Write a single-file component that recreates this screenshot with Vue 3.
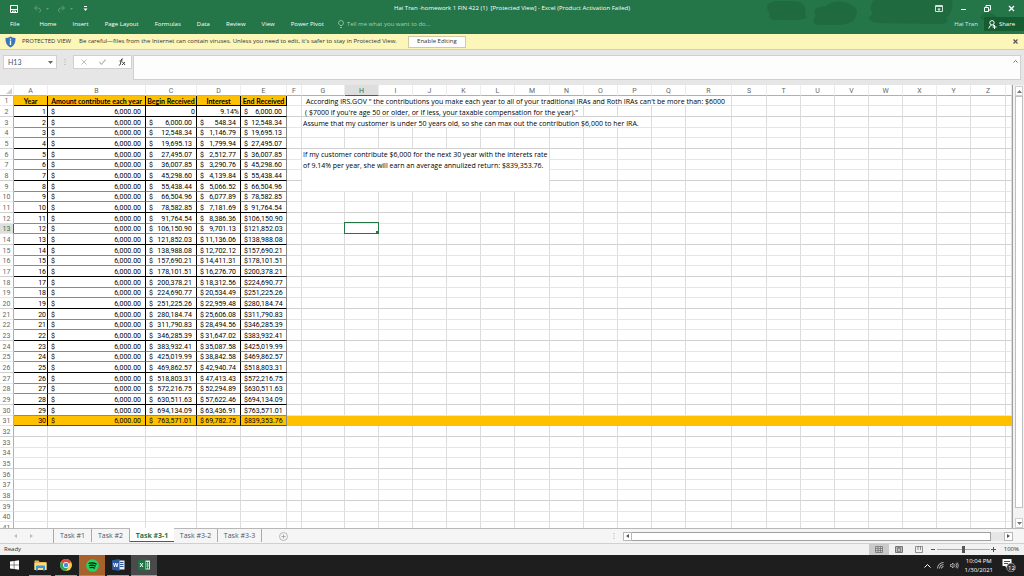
<script setup>
import { ref } from 'vue'

const menus = ['File', 'Home', 'Insert', 'Page Layout', 'Formulas', 'Data', 'Review', 'View', 'Power Pivot']
const letters = 'ABCDEFGHIJKLMNOPQRSTUVWXYZ'.split('')
const sheets = ['Task #1', 'Task #2', 'Task #3-1', 'Task #3-2', 'Task #3-3']
const active = 'Task #3-1'
const zoomLevel = ref(50)

const interest = [
  '9.14%', '548.34', '1,146.79', '1,799.94', '2,512.77', '3,290.76', '4,139.84', '5,066.52', '6,077.89', '7,181.69',
  '8,386.36', '9,701.13', '11,136.06', '12,702.12', '14,411.31', '16,276.70', '18,312.56', '20,534.49', '22,959.48', '25,606.08',
  '28,494.56', '31,647.02', '35,087.58', '38,842.58', '42,940.74', '47,413.43', '52,294.89', '57,622.46', '63,436.91', '69,782.75',
]
const ending = [
  '6,000.00', '12,548.34', '19,695.13', '27,495.07', '36,007.85', '45,298.60', '55,438.44', '66,504.96', '78,582.85', '91,764.54',
  '106,150.90', '121,852.03', '138,988.08', '157,690.21', '178,101.51', '200,378.21', '224,690.77', '251,225.26', '280,184.74', '311,790.83',
  '346,285.39', '383,932.41', '425,019.99', '469,862.57', '518,803.31', '572,216.75', '630,511.63', '694,134.09', '763,571.01', '839,353.76',
]

const notes = {
  1: { span: 12, rows: 1, cls: 'in2', text: 'According IRS.GOV " the contributions you make each year to all of your traditional IRAs and Roth IRAs can\'t be more than: $6000' },
  2: { span: 8, rows: 1, cls: 'in1', text: '( $7000 if you\'re age 50 or older, or If less, your taxable compensation for the year)."' },
  3: { span: 10, rows: 1, cls: '', text: 'Assume that my customer is under 50 years old, so she can max out the contribution $6,000 to her IRA.' },
  6: { span: 7, rows: 4, cls: 'wrap', text: 'If my customer contribute $6,000 for the next 30 year with the interets rate\nof 9.14% per year, she will earn an average annulized return: $839,353.76.' },
}

// Columns F through AA, minus those covered by merged cells
function tailCells(row) {
  const cells = [{ key: 'F' }]
  let skip = 0
  if (notes[row]) {
    cells.push({ key: 'note', note: notes[row] })
    skip = notes[row].span
  } else if (row > 6 && row < 10) {
    skip = 7
  }
  for (const key of [...letters.slice(6 + skip), 'AA']) cells.push({ key, selected: key === 'H' && row === 13 })
  return cells
}

const rows = Array.from({ length: 41 }, (_, i) => {
  const n = i + 1
  const year = n - 1
  const row = { n, tail: tailCells(n), year: null }
  if (n > 1 && n < 32) {
    row.year = year
    row.begin = year === 1 ? null : ending[year - 2]
    row.interest = interest[year - 1]
    row.end = ending[year - 1]
  }
  return row
})
</script>

<template>
  <div class="window">
    <header class="ribbon">
      <svg class="clouds" viewBox="0 0 270 30" aria-hidden="true">
        <path d="M16 14q-8-11 6-13h20q12 3 9 14q6 4-8 5h-22q-8-1-5-6z" />
        <path d="M62 15q-6-8 10-9q6-6 18-4q16 4 12 14q-2 8-16 9h-22q-8-1-2-10z" />
        <path d="M120 0h78q2 12-6 18q6 7-12 6q-40-1-58-1q-12-4-3-9q-5-6 1-14z" />
        <path d="M226 18q2-6 10-5q8 2 6 7q-8 5-16-2z" />
      </svg>
      <div class="titlebar">
        <div class="quick">
          <button aria-label="Save"><svg width="8" height="8" viewBox="0 0 8 8"><path d="M.5.5h7v7h-7zM1 4.500h6M2.500 7.500V6h3v1.500" fill="none" stroke="#fff" /></svg></button>
          <button aria-label="Undo" class="dim"><svg width="17" height="8" viewBox="0 0 17 8"><path d="M4 .5L1.500 3L4 5.500M2 3h3.500q2.500.5 2 3l-1.500 1.500" fill="none" stroke="#5f9d78" /><path d="M13 3h3l-1.500 2z" fill="#5f9d78" /></svg></button>
          <button aria-label="Redo" class="dim"><svg width="17" height="8" viewBox="0 0 17 8"><path d="M5 .5L7.500 3L5 5.500M7 3H3.500Q1 3.500 1.500 6L3 7.500" fill="none" stroke="#5f9d78" /><path d="M13 3h3l-1.500 2z" fill="#5f9d78" /></svg></button>
          <button aria-label="Customize"><svg width="5" height="6" viewBox="0 0 5 6"><path d="M1 .5h3" stroke="#fff" /><path d="M.5 2.500h4L2.500 5z" fill="#fff" /></svg></button>
        </div>
        <h1>Hai Tran -homework 1 FIN 422 (1)&nbsp; [Protected View] - Excel (Product Activation Failed)</h1>
        <div class="winbtns">
          <button aria-label="Ribbon display options"><svg width="8" height="7" viewBox="0 0 8 7"><path d="M.5 .5h7v6h-7zM1 1.500h6M2.500 4.200h3M4 3v3" fill="none" stroke="#e6f0ea" stroke-width=".9" /></svg></button>
          <button aria-label="Minimize"><svg width="7" height="7" viewBox="0 0 7 7"><path d="M1 4.500h5" stroke="#fff" /></svg></button>
          <button aria-label="Restore"><svg width="7" height="7" viewBox="0 0 7 7"><path d="M.5 2.500h4v4h-4zM2 2V.5h4.500V5H5" fill="none" stroke="#fff" /></svg></button>
          <button aria-label="Close"><svg width="7" height="7" viewBox="0 0 7 7"><path d="M1 1l5 5M6 1L1 6" stroke="#fff" stroke-width="1.300" /></svg></button>
        </div>
      </div>
      <nav class="menubar">
        <button v-for="m in menus" :key="m">{{ m }}</button>
        <label class="tell">
          <svg width="6" height="8" viewBox="0 0 6 8"><path d="M2 5.500Q.5 4 .5 2.800Q.8.500 3 .5T5.500 2.800Q5.500 4 4 5.500zM2 7.500h2" fill="none" stroke="#a9cdb8" stroke-width=".8" /></svg>
          <input type="text" placeholder="Tell me what you want to do..." aria-label="Tell me what you want to do" />
        </label>
        <span class="user">Hai Tran</span>
        <button class="share"><svg width="9" height="9" viewBox="0 0 9 9"><circle cx="4" cy="2.800" r="2.200" fill="none" stroke="#fff" /><path d="M.8 8.500Q1 5.500 3.500 5.500M5 5.200L6 6M4.500 7h4M6.500 5v4" fill="none" stroke="#fff" /></svg>Share</button>
      </nav>
    </header>

    <section class="notice">
      <svg width="11" height="12" viewBox="0 0 11 12"><path d="M5.500.5Q8 2 10.500 2Q11 9 5.500 11.500Q0 9 .5 2Q3 2 5.500.5z" fill="#3d76b8" /><path d="M5.500 2.500v1.200M5.500 4.500v4.500" stroke="#fff" stroke-width="1.300" /></svg>
      <strong>PROTECTED VIEW</strong>
      <span class="msg">Be careful—files from the Internet can contain viruses. Unless you need to edit, it's safer to stay in Protected View.</span>
      <button class="enable">Enable Editing</button>
      <button class="dismiss" aria-label="Close message"><svg width="5" height="5" viewBox="0 0 5 5"><path d="M.5.5l4 4M4.500.5l-4 4" stroke="#555" stroke-width="1.200" /></svg></button>
    </section>

    <section class="formula">
      <div class="namebox">
        <input type="text" value="H13" aria-label="Name box" />
        <svg width="5" height="3" viewBox="0 0 5 3"><path d="M0 0h5L2.500 3z" fill="#666" /></svg>
      </div>
      <svg class="dots" width="2" height="7" viewBox="0 0 2 7"><path d="M1 0v7" stroke="#aaa" stroke-dasharray="1 1.500" /></svg>
      <div class="fx">
        <button aria-label="Cancel"><svg width="6" height="6" viewBox="0 0 6 6"><path d="M.5.5l5 5M5.500.5l-5 5" stroke="#bbb" /></svg></button>
        <button aria-label="Enter"><svg width="7" height="6" viewBox="0 0 7 6"><path d="M.5 3l2 2.300L6.500.5" fill="none" stroke="#bbb" stroke-width="1.200" /></svg></button>
        <button aria-label="Insert function"><svg width="8" height="8" viewBox="0 0 8 8"><path d="M5 1Q3.500.5 3.200 2L2.300 6.500Q2 7.500.8 7M1.500 3h3M4.500 4l2.500 3M7 4L4 7" fill="none" stroke="#444" /></svg></button>
      </div>
      <div class="entry">
        <textarea aria-label="Formula bar"></textarea>
        <svg width="5" height="3" viewBox="0 0 5 3"><path d="M.5 2.500l2-2l2 2" fill="none" stroke="#777" /></svg>
      </div>
    </section>

    <main class="sheet">
      <div class="viewport">
        <table>
          <colgroup>
            <col class="w-head" /><col class="w-a" /><col class="w-b" /><col class="w-c" /><col class="w-d" /><col class="w-e" /><col class="w-f" /><col class="w-g" />
            <col v-for="n in 5" :key="n" class="w-n" />
            <col class="w-m" />
            <col v-for="n in 4" :key="'n' + n" class="w-n" />
            <col class="w-e" />
            <col class="w-m" />
            <col v-for="n in 6" :key="'t' + n" class="w-n" />
            <col class="w-m" />
            <col />
          </colgroup>
          <thead>
            <tr>
              <th class="corner"><svg width="6" height="6" viewBox="0 0 6 6"><path d="M6 0v6H0z" fill="#cfcfcf" /></svg></th>
              <th v-for="l in letters" :key="l" scope="col" :class="{ cur: l === 'H' }">{{ l }}</th>
              <th></th>
            </tr>
          </thead>
          <tbody>
            <tr v-for="r in rows" :key="r.n" :class="{ titles: r.n === 1, data: r.year, total: r.n === 31 }">
              <th scope="row" :class="{ cur: r.n === 13 }">{{ r.n }}</th>
              <template v-if="r.n === 1">
                <td>Year</td>
                <td>Amount contribute each year</td>
                <td>Begin Received</td>
                <td>Interest</td>
                <td>End Received</td>
              </template>
              <template v-else-if="r.year">
                <td class="num">{{ r.year }}</td>
                <td><div class="money"><span>$</span><span>6,000.00</span></div></td>
                <td v-if="r.begin"><div class="money"><span>$</span><span>{{ r.begin }}</span></div></td>
                <td v-else class="num">0</td>
                <td v-if="r.year > 1"><div class="money"><span>$</span><span>{{ r.interest }}</span></div></td>
                <td v-else class="num">{{ r.interest }}</td>
                <td><div class="money"><span>$</span><span>{{ r.end }}</span></div></td>
              </template>
              <template v-else>
                <td v-for="c in 5" :key="c"></td>
              </template>
              <template v-for="c in r.tail" :key="c.key">
                <td v-if="c.note" class="note" :class="c.note.cls" :colspan="c.note.span" :rowspan="c.note.rows">{{ c.note.text }}</td>
                <td v-else :class="{ picked: c.selected }"></td>
              </template>
            </tr>
          </tbody>
        </table>
      </div>
      <div class="vscroll">
        <button aria-label="Scroll up"><svg width="5" height="3" viewBox="0 0 5 3"><path d="M0 3h5L2.500 0z" fill="#777" /></svg></button>
        <div class="vthumb"></div>
        <div class="vtrack"></div>
        <button aria-label="Scroll down"><svg width="5" height="3" viewBox="0 0 5 3"><path d="M0 0h5L2.500 3z" fill="#777" /></svg></button>
      </div>
    </main>

    <nav class="tabs">
      <div class="arrows">
        <button aria-label="Previous sheet"><svg width="3" height="4" viewBox="0 0 3 4"><path d="M3 0v4L0 2z" fill="#bbb" /></svg></button>
        <button aria-label="Next sheet"><svg width="3" height="4" viewBox="0 0 3 4"><path d="M0 0v4l3-2z" fill="#bbb" /></svg></button>
      </div>
      <button v-for="s in sheets" :key="s" class="tab" :class="{ on: s === active, long: s.length > 7 }">{{ s }}</button>
      <button class="add" aria-label="New sheet"><svg width="9" height="9" viewBox="0 0 9 9"><circle cx="4.500" cy="4.500" r="4" fill="none" stroke="#aaa" stroke-width=".8" /><path d="M4.500 2.500v4M2.500 4.500h4" stroke="#999" stroke-width=".8" /></svg></button>
      <svg class="grip" width="2" height="6" viewBox="0 0 2 6"><path d="M1 0v6" stroke="#aaa" stroke-dasharray="1 1.500" /></svg>
      <div class="hscroll">
        <button aria-label="Scroll left"><svg width="3" height="4" viewBox="0 0 3 4"><path d="M3 0v4L0 2z" fill="#555" /></svg></button>
        <div class="hthumb"></div>
        <div class="htrack"></div>
        <button aria-label="Scroll right"><svg width="3" height="4" viewBox="0 0 3 4"><path d="M0 0v4l3-2z" fill="#555" /></svg></button>
      </div>
    </nav>

    <footer class="status">
      <span class="ready">Ready</span>
      <button class="view on" aria-label="Normal view"><svg width="8" height="7" viewBox="0 0 8 7"><path d="M.5 .5h7v6h-7zM0 2.500h8M0 4.500h8M3 0v7M5.500 0v7" fill="none" stroke="#777" stroke-width=".8" /></svg></button>
      <button class="view" aria-label="Page layout view"><svg width="8" height="7" viewBox="0 0 8 7"><path d="M.5 .5h7v6h-7z" fill="#bbb" stroke="#777" /><path d="M2.500 1.500h3v4h-3zM3 2.500h2M3 4h2" fill="#eee" stroke="#666" stroke-width=".7" /></svg></button>
      <button class="view" aria-label="Page break view"><svg width="8" height="7" viewBox="0 0 8 7"><path d="M.5 .5h7v6h-7zM3 0v4M5.500 0v4" fill="none" stroke="#777" stroke-width=".8" /></svg></button>
      <button class="step" aria-label="Zoom out"><svg width="4" height="5" viewBox="0 0 4 5"><path d="M0 2.500h4" stroke="#555" /></svg></button>
      <input v-model="zoomLevel" type="range" min="0" max="100" aria-label="Zoom" />
      <button class="step" aria-label="Zoom in"><svg width="5" height="5" viewBox="0 0 5 5"><path d="M0 2.500h5M2.500 0v5" stroke="#555" /></svg></button>
      <span class="pct">100%</span>
    </footer>

    <div class="taskbar">
      <button class="app" aria-label="Start"><svg width="9" height="10" viewBox="0 0 9 10"><path d="M0 1.500L3.800 1v3.700H0zM4.300.9L9 .2v4.500H4.300zM0 5.300h3.800V9L0 8.500zM4.300 5.300H9v4.500l-4.700-.7z" fill="#fff" /></svg></button>
      <button class="app run" aria-label="File Explorer"><svg width="13" height="11" viewBox="0 0 13 11"><path d="M.5.5h4l1 1.500h7v8H.5z" fill="#e9ba4b" /><path d="M.5 3h12v7H.5z" fill="#fbdc83" /><path d="M2 10.500V6.500q0-1 1-1h7q1 0 1 1v4H9V8H4v2.500z" fill="#3f96dc" /></svg></button>
      <button class="app run" aria-label="Chrome"><svg width="12" height="12" viewBox="0 0 12 12"><circle cx="6" cy="6" r="6" fill="#f8cf3c" /><path d="M6 6L.8 3A6 6 0 0 1 11.200 3z" fill="#e0473a" /><path d="M6 6L.8 3A6 6 0 0 0 6 12l2.600-4.500z" fill="#35a455" /><circle cx="6" cy="6" r="2.900" fill="#fff" /><circle cx="6" cy="6" r="2.200" fill="#4a86e8" /></svg></button>
      <button class="app run spotify" aria-label="Spotify"><svg width="13" height="13" viewBox="0 0 13 13"><circle cx="6.500" cy="6.500" r="6.300" fill="#1fd662" /><path d="M2.500 4.500q4-1.500 8 .6M3 6.700q3.500-1.200 6.800.5M3.500 8.700q3-.9 5.500.5" fill="none" stroke="#111" stroke-width="1.200" /></svg></button>
      <button class="app run" aria-label="Word"><svg width="13" height="12" viewBox="0 0 13 12"><path d="M6 1.500h6.500v9H6z" fill="#e8eef8" /><path d="M8 3.500h3.500M8 5.500h3.500M8 7.500h3.500" stroke="#2b579a" /><path d="M0 1.200L7.500 0v12L0 10.800z" fill="#2b579a" /><path d="M1.500 4l1 4l1.200-4l1.200 4l1-4" fill="none" stroke="#fff" stroke-width=".9" /></svg></button>
      <button class="app run excel" aria-label="Excel"><svg width="13" height="12" viewBox="0 0 13 12"><path d="M6 1.500h6v9H6z" fill="#dcebe2" /><path d="M8 3h3v6.500H8z" fill="#1f7244" /><path d="M9.500 3v7M8 5h3M8 7h3" stroke="#dcebe2" stroke-width=".6" /><path d="M0 1.200L7.500 0v12L0 10.800z" fill="#1f7244" /><path d="M2 4l3 4M5 4L2 8" stroke="#fff" /></svg></button>
      <div class="tray">
        <svg width="7" height="4" viewBox="0 0 7 4"><path d="M.5 3.500l3-3l3 3" fill="none" stroke="#fff" /></svg>
        <svg width="7" height="7" viewBox="0 0 7 7"><path d="M.5 6.500A6 6 0 0 1 6.500.5M2.500 6.500A4 4 0 0 1 6.500 2.500M4.500 6.500A2 2 0 0 1 6.500 4.500" fill="none" stroke="#ddd" stroke-width=".8" /></svg>
        <svg width="9" height="7" viewBox="0 0 9 7"><path d="M.5 2.500h1L3 1v5L1.500 4.500h-1zM4.500 2.200q1 1.300 0 2.600M6 1.200q1.800 2.300 0 4.600M7.300.5q2.200 3 0 6" fill="none" stroke="#ddd" stroke-width=".7" /></svg>
        <div class="clock"><time>10:04 PM</time><time>1/30/2021</time></div>
        <svg class="bell" width="14" height="13" viewBox="0 0 14 13"><path d="M.5 0h9v7H5v2L3 7H.5z" fill="#fff" /><path d="M2 2.500h6M2 4.500h4" stroke="#1e1e1e" stroke-width=".8" /><circle cx="9" cy="8.500" r="4.300" fill="#333" stroke="#aaa" stroke-width=".7" /><text x="6" y="11" font-size="6" fill="#fff">12</text></svg>
      </div>
    </div>
  </div>
</template>

<style>
body {
  background: #e6e6e6;
}
</style>

<style scoped>
.window {
  height: 100vh;
  display: flex;
  flex-direction: column;
  overflow: hidden;
  font-family: "Open Sans", "Noto Sans", sans-serif;
  font-size: 6px;
  line-height: 9px;
  color: #333;
  background: #e6e6e6;
}
.window * {
  box-sizing: border-box;
}
button,
input,
textarea {
  font: inherit;
  color: inherit;
  margin: 0;
  padding: 0;
  border: 0;
  background: none;
  outline: 0;
}
button {
  display: flex;
  align-items: center;
  justify-content: center;
  white-space: nowrap;
}
svg {
  display: block;
  flex: none;
}

.ribbon {
  position: relative;
  background: #247548;
  color: #fff;
  height: 34px;
  flex: none;
}
.clouds {
  position: absolute;
  top: 0;
  right: 0;
  width: 270px;
  height: 30px;
  fill: #206a40;
}
.titlebar,
.menubar {
  position: relative;
  display: flex;
  align-items: center;
  height: 17px;
}
.titlebar {
  display: grid;
  grid-template-columns: 1fr auto 1fr;
}
.quick {
  display: flex;
  align-items: center;
  gap: 7px;
  padding-left: 10px;
}
.quick button:first-child {
  margin-right: 8px;
}
.quick button:last-child {
  margin-left: 2px;
}
h1 {
  margin: 0;
  font-size: 6px;
  font-weight: 400;
}
.winbtns {
  display: flex;
  justify-content: flex-end;
  gap: 17px;
  padding-right: 9px;
}
.menubar {
  padding-left: 10px;
  gap: 16px;
  height: 14px;
}
.menubar > button:first-child {
  margin-right: 4px;
}
.tell {
  display: flex;
  align-items: center;
  gap: 3px;
  flex: 1;
  margin-left: -2px;
}
.tell input {
  width: 120px;
}
.tell input::placeholder {
  color: #a9cdb8;
  opacity: 1;
}
.user {
  color: #dcebe2;
}
.menubar .share {
  align-self: stretch;
  gap: 2px;
  padding: 0 9px 0 4px;
  margin-left: -10px;
  background: #155c31;
}

.notice {
  display: flex;
  align-items: center;
  height: 16px;
  flex: none;
  padding: 0 6px 0 5px;
  background: #fcf6b8;
  border-bottom: 1px solid #d8d29a;
}
.notice strong {
  font-weight: 400;
  margin-left: 6px;
}
.msg {
  margin-left: 8px;
}
.enable {
  width: 58px;
  height: 12px;
  margin-left: 11px;
  background: #fff;
  border: 1px solid #cfcba8;
}
.dismiss {
  margin-left: auto;
}

.formula {
  display: flex;
  align-items: flex-start;
  height: 35px;
  flex: none;
  padding: 5px 3px 5px 3px;
}
.namebox {
  display: flex;
  align-items: center;
  width: 54px;
  height: 14px;
  padding: 0 3px 0 4px;
  background: #fff;
  border: 1px solid #d0d0d0;
}
.namebox input {
  flex: 1;
  min-width: 0;
  font-family: Lato, "Open Sans", sans-serif;
  font-size: 7px;
  color: #456;
}
.dots {
  margin: 4px 7px 0 7px;
}
.fx {
  display: flex;
  width: 59px;
  height: 14px;
  background: #fff;
  border: 1px solid #d0d0d0;
}
.fx button {
  flex: 1;
}
.entry {
  display: flex;
  flex: 1;
  height: 25px;
  margin-left: 1px;
  padding: 4px 2px 0 0;
  background: #fdfdfd;
  border: 1px solid #d0d0d0;
}
.entry textarea {
  flex: 1;
  height: 16px;
  resize: none;
}

.sheet {
  flex: 1;
  min-height: 0;
  display: flex;
  background: #fff;
}
.viewport {
  flex: 1;
  min-width: 0;
  overflow: hidden;
}
table {
  width: 100%;
  table-layout: fixed;
  border-collapse: separate;
  border-spacing: 0;
  font-family: Roboto, "Open Sans", sans-serif;
  font-size: 7px;
  line-height: 7px;
  color: #000;
}
.w-head { width: 14px; }
.w-a, .w-n { width: 34px; }
.w-b { width: 98px; }
.w-c { width: 51px; }
.w-d { width: 44px; }
.w-e { width: 46px; }
.w-f { width: 15px; }
.w-g { width: 43px; }
.w-m { width: 35px; }
th,
td {
  height: 11px;
  padding: 0;
  border-right: 1px solid #dcdcdc;
  border-bottom: 1px solid #e6e6e6;
  vertical-align: bottom;
  white-space: nowrap;
}
th {
  font-weight: 400;
  color: #666;
  text-align: center;
}
thead th {
  border-right-color: #ececec;
  border-bottom-color: #b0b0b0;
}
.corner svg {
  margin: 0 1px 1px auto;
}
thead .cur {
  background: #dedede;
  color: #247548;
  border-bottom-color: #247548;
}
tbody th {
  border-right-color: #b0b0b0;
}
tbody .cur {
  background: #dedede;
  color: #247548;
  border-right-color: #247548;
}
tbody tr:nth-child(3n + 1) > * {
  height: 10px;
}
tbody tr:nth-child(3n + 2) > * {
  border-bottom-color: #d0d0d0;
}
.data td:nth-child(-n + 6) {
  border-color: #8a8a8a;
}
.data:nth-child(3n + 2) td:nth-child(-n + 6) {
  border-bottom-color: #000;
}
.data td:nth-child(n + 2):nth-child(-n + 5) {
  border-right-color: #000;
}
.titles td:nth-child(-n + 6) {
  background: #ffc000;
  border-color: #000;
  font-family: Lato, "Open Sans", sans-serif;
  font-weight: 700;
  text-align: center;
}
.total td,
.total td:nth-child(n + 7) {
  background: #ffc000;
  border-color: #ffc000;
}
.total td:nth-child(-n + 6) {
  border-bottom-color: #6b5000;
}
.num {
  text-align: right;
  padding-right: 1px;
}
.money {
  display: flex;
  justify-content: space-between;
  padding: 0 4px 0 3px;
}
.note {
  padding-left: 1px;
  font-family: "Open Sans", "Noto Sans", sans-serif;
  background: #fff;
}
.in1 {
  padding-left: 3px;
}
.in2 {
  padding-left: 4px;
}
.wrap {
  white-space: pre;
  vertical-align: top;
  line-height: 11px;
}
.picked {
  position: relative;
}
.picked::before {
  content: "";
  position: absolute;
  inset: -2px -1px -1px -1px;
  border: 1px solid #247548;
}
.picked::after {
  content: "";
  position: absolute;
  right: -1px;
  bottom: -1px;
  width: 3px;
  height: 3px;
  background: #247548;
}
.vscroll {
  display: flex;
  flex-direction: column;
  width: 12px;
  padding: 1px 1px 0 2px;
  border-left: 1px solid #a0a0a0;
  background: #f3f3f3;
}
.vscroll button {
  height: 10px;
  background: #fff;
  border: 1px solid #d0d0d0;
}
.vthumb {
  flex: 1;
  background: #fff;
  border: 1px solid #c0c0c0;
}
.vtrack {
  height: 10px;
}

.tabs {
  display: flex;
  align-items: stretch;
  height: 15px;
  flex: none;
  padding-right: 11px;
  background: #f5f5f5;
  border-top: 1px solid #b8b8b8;
  font-size: 7px;
  color: #555;
}
.arrows {
  display: flex;
  align-items: center;
  width: 54px;
  padding-left: 14px;
  gap: 13px;
  border-right: 1px solid #aaa;
}
.tab {
  width: 38px;
  height: 13px;
  border-right: 1px solid #aaa;
}
.tab.long {
  width: 44px;
}
.tab.on {
  margin-top: -1px;
  height: 14px;
  padding-top: 1px;
  background: #fff;
  color: #247548;
  font-weight: 700;
  border-right: 0;
  border-bottom: 1px solid #247548;
}
.add {
  margin-left: 17px;
}
.grip {
  margin: 4px 8px 0 auto;
}
.hscroll {
  display: flex;
  align-self: center;
  width: 390px;
  height: 9px;
  background: #e6e6e6;
}
.hscroll button {
  width: 9px;
  background: #fff;
  border: 1px solid #b8b8b8;
}
.hthumb {
  flex: 1;
  background: #fff;
  border: 1px solid #a0a0a0;
  border-left: 0;
}
.htrack {
  width: 13px;
}

.status {
  display: flex;
  align-items: center;
  height: 12px;
  flex: none;
  padding: 0 5px 0 4px;
  background: #f1f1f1;
  border-top: 1px solid #d0d0d0;
}
.ready {
  margin-right: auto;
}
.view {
  width: 20px;
  align-self: stretch;
}
.view.on {
  background: #cacaca;
}
.step {
  width: 8px;
}
.status input {
  appearance: none;
  width: 53px;
  height: 8px;
  background: linear-gradient(#aaa, #aaa) center / 100% 1px no-repeat;
}
.status input::-webkit-slider-thumb {
  appearance: none;
  width: 3px;
  height: 7px;
  background: #555;
}
.pct {
  margin-left: 6px;
}

.taskbar {
  display: flex;
  height: 21px;
  flex: none;
  padding-left: 1px;
  background: #1e1e1e;
  color: #fff;
}
.app {
  width: 26px;
  border-bottom: 1px solid transparent;
}
.run {
  background: linear-gradient(#76a9dc, #76a9dc) bottom / 22px 1px no-repeat;
  background-origin: border-box;
}
.run.spotify {
  background: #a6612c;
  border-bottom-color: #ee7a20;
}
.run.excel {
  background-color: #4a4a4a;
  border-bottom-color: #76a9dc;
}
.tray {
  display: flex;
  align-items: center;
  margin-left: auto;
  gap: 6px;
  padding-right: 8px;
}
.clock {
  display: flex;
  flex-direction: column;
  align-items: center;
}
.bell {
  margin-left: 3px;
}
</style>
